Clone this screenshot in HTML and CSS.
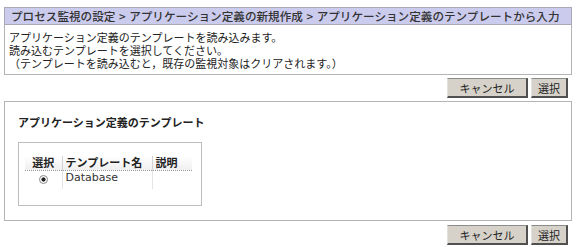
FILE: index.html
```html
<!DOCTYPE html>
<html lang="ja">
<head>
<meta charset="utf-8">
<link rel="stylesheet" href="styles.css">
</head>
<body>
<div class="page">
  <div class="crumb">プロセス監視の設定 &gt; アプリケーション定義の新規作成 &gt; アプリケーション定義のテンプレートから入力</div>
  <div class="msg">
    <div>アプリケーション定義のテンプレートを読み込みます。</div>
    <div>読み込むテンプレートを選択してください。</div>
    <div>（テンプレートを読み込むと，既存の監視対象はクリアされます。）</div>
  </div>
  <div class="btns">
    <button class="btn btn-cancel">キャンセル</button>
    <button class="btn btn-ok">選択</button>
  </div>
  <div class="panel">
    <div class="ptitle">アプリケーション定義のテンプレート</div>
    <div class="inner">
      <table class="tbl">
        <thead>
          <tr><th class="c-sel">選択</th><th class="c-name">テンプレート名</th><th class="c-desc">説明</th></tr>
        </thead>
        <tbody>
          <tr><td class="c-sel"><span class="radio"></span></td><td class="c-name latin">Database</td><td class="c-desc"></td></tr>
        </tbody>
      </table>
    </div>
  </div>
  <div class="btns btns-bottom">
    <button class="btn btn-cancel">キャンセル</button>
    <button class="btn btn-ok">選択</button>
  </div>
</div>
</body>
</html>
```
FILE: styles.css
```css
* { box-sizing: border-box; }
html, body { margin: 0; padding: 0; background: #fff; }
body {
  font-family: "Noto Sans CJK JP", "DejaVu Sans", sans-serif;
  font-size: 11px;
  color: #222;
}
.page {
  padding: 7px 5px 0 4px;
  width: 577px;
}
.crumb {
  height: 18px;
  line-height: 16px;
  background: #cbcbee;
  border: 1px solid #a9a9b8;
  padding-left: 6px;
  font-size: 11.6px;
  font-weight: 500;
  color: #333;
  white-space: nowrap;
  overflow: hidden;
  word-spacing: 1px;
}
.msg {
  border: 1px solid #b4b4b4;
  border-top: none;
  height: 50px;
  padding: 6px 0 0 4px;
  line-height: 13px;
  color: #222;
}
.btns {
  display: flex;
  justify-content: flex-end;
  gap: 3px;
  margin-top: 3px;
  padding-right: 4px;
}
.btns-bottom { margin-top: 4px; }
.btn {
  height: 20px;
  margin: 0;
  padding: 0;
  font-family: "Noto Sans CJK JP", sans-serif;
  font-size: 11px;
  color: #222;
  background: #d6d2ca;
  border-top: 1px solid #8c8c8c;
  border-left: 1px solid #e4e2dc;
  border-right: 2px solid #505050;
  border-bottom: 2px solid #505050;
  line-height: 16px;
}
.btn-cancel { width: 81px; }
.btn-ok { width: 37px; }
.panel {
  margin-top: 3px;
  border: 1px solid #b4b4b4;
  height: 120px;
  padding: 14px 0 0 13px;
}
.ptitle {
  font-weight: bold;
  line-height: 13px;
  color: #222;
}
.inner {
  margin-top: 13px;
  width: 184px;
  height: 64px;
  border: 1px solid #bdbdbd;
  padding: 13px 0 0 6px;
}
.tbl {
  border-collapse: collapse;
  font-size: 11px;
}
.tbl th {
  font-weight: bold;
  height: 14px;
  line-height: 13px;
  padding: 0 3px;
  text-align: left;
  background: linear-gradient(#ffffff, #efefef);
  border-bottom: 1px dotted #999;
  border-left: 1px solid #d2d2d2;
  color: #222;
}
.tbl td {
  height: 19px;
  line-height: 14px;
  padding: 0 3px 4px;
  border-left: 1px solid #e4e4e4;
  vertical-align: middle;
}
.tbl th:first-child, .tbl td:first-child { border-left: none; }
.tbl .c-sel { width: 37px; text-align: center; }
.tbl .c-name { width: 90px; }
.tbl .c-desc { width: 40px; }
.latin { font-family: "DejaVu Sans", sans-serif; font-size: 11px; color: #333; }
.radio {
  display: inline-block;
  width: 9px;
  height: 9px;
  border-radius: 50%;
  border: 1px solid #8a8a8a;
  background: radial-gradient(circle, #222 0 1.8px, #fff 2.4px);
  vertical-align: -1px;
}
```
